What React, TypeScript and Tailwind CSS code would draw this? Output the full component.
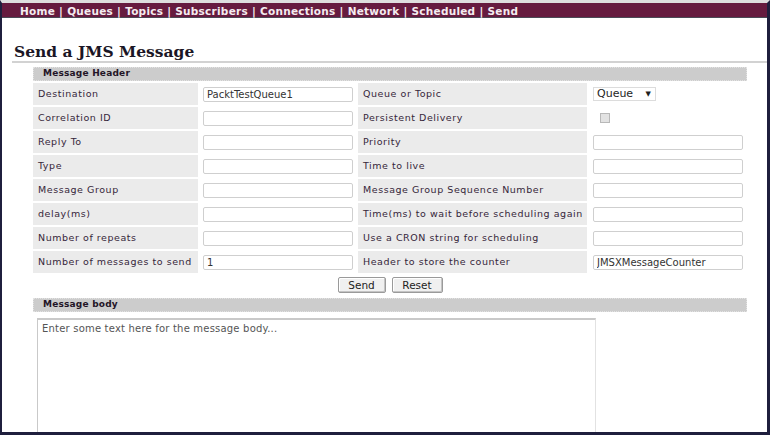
import React from 'react';

const NAV = ['Home', 'Queues', 'Topics', 'Subscribers', 'Connections', 'Network', 'Scheduled', 'Send'];

type Row = {
    left: string;
    leftValue?: string;
    right: string;
    rightKind: 'text' | 'select' | 'checkbox';
    rightValue?: string;
};

const ROWS: Row[] = [
    { left: 'Destination', leftValue: 'PacktTestQueue1', right: 'Queue or Topic', rightKind: 'select' },
    { left: 'Correlation ID', right: 'Persistent Delivery', rightKind: 'checkbox' },
    { left: 'Reply To', right: 'Priority', rightKind: 'text' },
    { left: 'Type', right: 'Time to live', rightKind: 'text' },
    { left: 'Message Group', right: 'Message Group Sequence Number', rightKind: 'text' },
    { left: 'delay(ms)', right: 'Time(ms) to wait before scheduling again', rightKind: 'text' },
    { left: 'Number of repeats', right: 'Use a CRON string for scheduling', rightKind: 'text' },
    { left: 'Number of messages to send', leftValue: '1', right: 'Header to store the counter', rightKind: 'text', rightValue: 'JMSXMessageCounter' },
];

function Label({ text }: { text: string }) {
    return (
        <div className="h-[22px] bg-[#ebebeb] flex items-center pl-[5px] text-[9.5px] tracking-[0.55px] text-[#36263a] whitespace-nowrap">
            {text}
        </div>
    );
}

function TextBox({ value }: { value?: string }) {
    return (
        <input
            readOnly
            defaultValue={value ?? ''}
            className="h-[15px] w-[150px] bg-white border border-[#cfcfcf] rounded-[2px] px-[3px] text-[10px] text-[#333] outline-none"
            style={{ fontFamily: '"DejaVu Sans", sans-serif' }}
        />
    );
}

function SectionBar({ title }: { title: string }) {
    return (
        <div className="h-[14px] bg-[#cccccc] border border-dotted border-[#e2e2e2] flex items-center pl-[9px] text-[9px] font-bold text-[#231426] tracking-[0.2px]">
            {title}
        </div>
    );
}

function Btn({ label, w }: { label: string; w: string }) {
    return (
        <button
            className={`${w} h-[16px] bg-[#f0f0f0] border border-[#9a9a9a] rounded-[2px] text-[10.5px] text-[#222] leading-none shadow-[inset_-1px_-1px_0_#c4c4c4,inset_1px_1px_0_#ffffff]`}
        >
            {label}
        </button>
    );
}

export default function App() {
    return (
        <div
            className="w-[770px] h-[435px] overflow-hidden bg-white border-l-2 border-r-[3px] border-b-[3px] border-t-[3px] border-[#1f1f3d] border-t-[#dedede] flex flex-col"
            style={{ fontFamily: '"DejaVu Sans", Verdana, sans-serif' }}
        >
            {/* Top navigation */}
            <div className="h-[15px] shrink-0 bg-[#661b3f] border-b border-[#4a4a55] flex items-center pt-[2px] pl-[18px] text-[10.5px] leading-none font-bold text-[#f4ecf0] whitespace-nowrap tracking-[0.25px]">
                {NAV.map((item, i) => (
                    <span key={item}>
                        {item}
                        {i < NAV.length - 1 && <span className="mx-[4px]">|</span>}
                    </span>
                ))}
            </div>

            {/* Title */}
            <div className="mt-[25px] ml-[10px] border-b-2 border-[#d2d2d2] pb-[1px]">
                <h1
                    className="pl-[2px] text-[15.5px] leading-[17px] font-bold text-[#1b1625]"
                    style={{ fontFamily: '"DejaVu Serif", Georgia, serif' }}
                >
                    Send a JMS Message
                </h1>
            </div>

            {/* Form */}
            <div className="ml-[31px] mt-[4px] w-[714px]">
                <SectionBar title="Message Header" />
                <div className="mt-[2px] grid grid-cols-[165px_156px_229px_158px] gap-[2px]">
                    {ROWS.map((row) => (
                        <React.Fragment key={row.left}>
                            <Label text={row.left} />
                            <div className="h-[22px] flex items-center pl-[3px]">
                                <TextBox value={row.leftValue} />
                            </div>
                            <Label text={row.right} />
                            <div className="h-[22px] flex items-center pl-[4px]">
                                {row.rightKind === 'text' && <TextBox value={row.rightValue} />}
                                {row.rightKind === 'select' && (
                                    <div className="h-[14px] w-[63px] border border-[#dcdcdc] flex items-center justify-between pl-[3px] pr-[4px] text-[11px] text-[#1e1e1e]">
                                        <span>Queue</span>
                                        <span className="text-[7px]">▼</span>
                                    </div>
                                )}
                                {row.rightKind === 'checkbox' && (
                                    <div className="ml-[7px] w-[10px] h-[10px] border border-[#b8b8b8] bg-[#e2e2e2]" />
                                )}
                            </div>
                        </React.Fragment>
                    ))}
                </div>

                <div className="mt-[4px] flex justify-center gap-[6px]">
                    <Btn label="Send" w="w-[48px]" />
                    <Btn label="Reset" w="w-[51px]" />
                </div>

                <div className="mt-[5px]">
                    <SectionBar title="Message body" />
                </div>

                <div className="mt-[6px] ml-[4px] w-[559px] h-[130px] bg-white border-t-2 border-l border-[#c9c9c9] border-r border-r-[#e2e2e2] border-r-dotted px-[4px] pt-[1px] text-[10px] text-[#555] tracking-[0.2px]">
                    Enter some text here for the message body...
                </div>
            </div>
        </div>
    );
}
